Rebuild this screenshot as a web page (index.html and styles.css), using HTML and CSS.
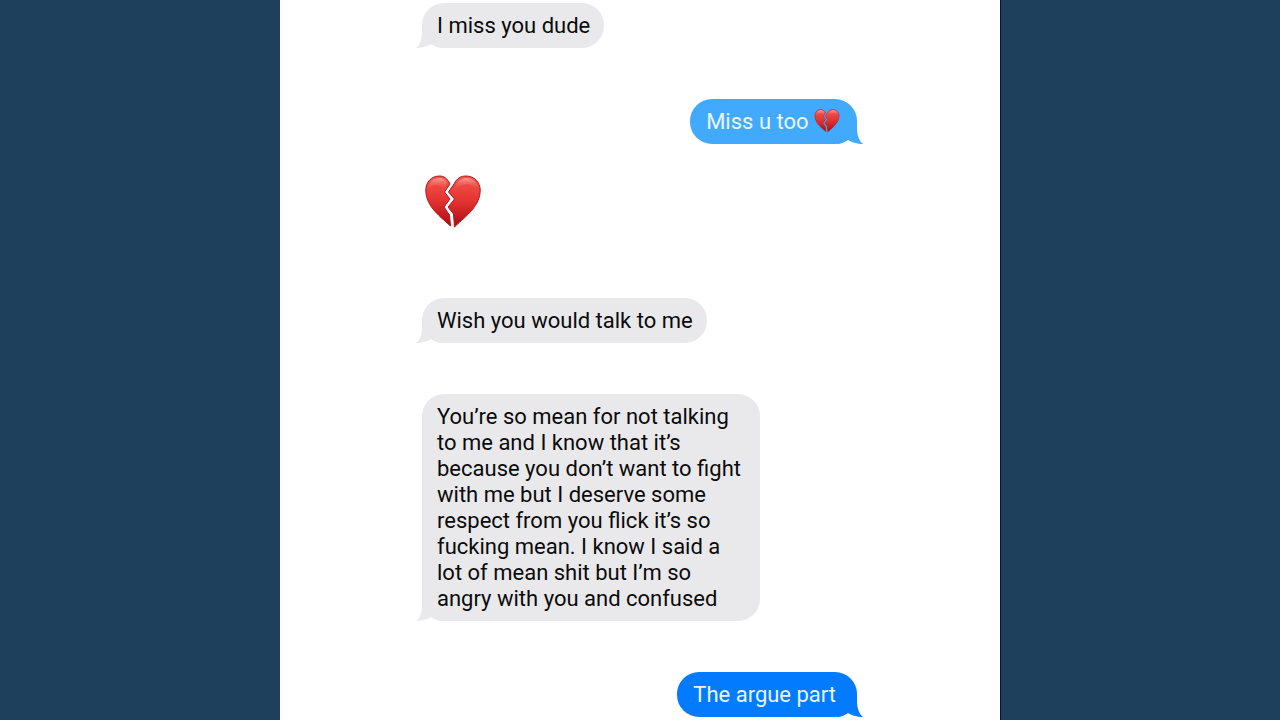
FILE: index.html
```html
<!DOCTYPE html>
<html lang="en">
  <head>
    <meta charset="utf-8">
    <title>Messages</title>
    <link rel="stylesheet" href="styles.css">
  </head>
  <body>
    <svg class="defs" aria-hidden="true">
      <symbol id="tail" viewBox="0 0 26 26">
        <path d="M6 4V10C6 17 4 23 0 26C6 26 12 24 15 22C18 24 22 26 26 26V4Z"/>
      </symbol>
      <linearGradient id="red" x1="0" y1="0" x2="0" y2="1">
        <stop offset="0" stop-color="#f4574f"/>
        <stop offset="0.5" stop-color="#e33230"/>
        <stop offset="1" stop-color="#a90c12"/>
      </linearGradient>
      <linearGradient id="shine" x1="0" y1="0" x2="0" y2="1">
        <stop offset="0" stop-color="#ffb9b0" stop-opacity="0.7"/>
        <stop offset="1" stop-color="#ff6a60" stop-opacity="0"/>
      </linearGradient>
      <symbol id="heart" viewBox="0 0 56 54">
        <g fill="url(#red)" stroke="#b5161b" stroke-width="1">
          <path d="M25 9C22 3 19 1 14.500 1C6 1 .8 7.500 .8 15C.8 30 12 39 25.500 51L24.500 40L19 32L25 24L19.500 17Z"/>
          <path d="M29 9C32 3 36 1 41 1C49.500 1 55.200 7.500 55.200 15C55.200 31 42 40 29.500 52L28.500 39L23 32L29.500 24L23.500 17Z"/>
        </g>
        <path fill="url(#shine)" d="M3 14C3 7 9 3 14 3C18 3 21 5 22 8L20 13C14 9 8 9 3 14Z"/>
        <path fill="url(#shine)" d="M31 10C34 5 37 3 42 3C47 3 53 7 53 14C47 8 39 8 31 13Z"/>
      </symbol>
    </svg>
    <main class="screen">
      <div class="thread">
        <div class="msg in">I miss you dude<svg class="tail"><use href="#tail"/></svg></div>
        <div class="msg out faded">Miss u too <svg class="heart" role="img" aria-label="broken heart"><use href="#heart"/></svg><svg class="tail"><use href="#tail"/></svg></div>
        <svg class="big-heart" role="img" aria-label="broken heart"><use href="#heart"/></svg>
        <div class="msg in">Wish you would talk to me<svg class="tail"><use href="#tail"/></svg></div>
        <div class="msg in">You’re so mean for not talking to me and I know that it’s because you don’t want to fight with me but I deserve some respect from you flick it’s so fucking mean. I know I said a lot of mean shit but I’m so angry with you and confused<svg class="tail"><use href="#tail"/></svg></div>
        <div class="msg out">The argue part<svg class="tail"><use href="#tail"/></svg></div>
      </div>
    </main>
  </body>
</html>
```
FILE: styles.css
```css
body {
  margin: 0;
  background: #1e405c;
  font-family: Roboto, "Liberation Sans", sans-serif;
}
.defs {
  position: absolute;
  width: 0;
  height: 0;
}
.screen {
  max-width: 720px;
  min-height: 100vh;
  margin: 0 auto;
  background: white;
  box-shadow: 1px 0 #04163c;
  display: flex;
  justify-content: center;
  box-sizing: border-box;
  padding: 3px 17px 4px 16px;
}
.thread {
  flex: 0 1 435px;
  display: flex;
  flex-direction: column;
  gap: 51px;
}
.msg {
  position: relative;
  isolation: isolate;
  box-sizing: border-box;
  max-width: 338px;
  border-radius: 22px;
  font-size: 22px;
  line-height: 26px;
}
.in {
  align-self: flex-start;
  padding: 10px 14px 9px 15px;
  background: #e9e9eb;
  color: #0b0b0c;
  fill: #e9e9eb;
}
.out {
  align-self: flex-end;
  padding: 10px 21px 9px 16px;
  background: #037bff;
  color: #e9f6ff;
  fill: #037bff;
}
.faded {
  background: #42aafc;
  fill: #42aafc;
}
.tail {
  position: absolute;
  z-index: -1;
  bottom: 0;
  left: -6px;
  width: 26px;
  height: 26px;
}
.out .tail {
  left: auto;
  right: -6px;
  transform: scaleX(-1);
}
.heart {
  width: 26px;
  height: 24px;
  margin-right: -4px;
  vertical-align: -4px;
}
.big-heart {
  width: 56px;
  height: 54px;
  margin: -20px 0 18px 3px;
}
```
